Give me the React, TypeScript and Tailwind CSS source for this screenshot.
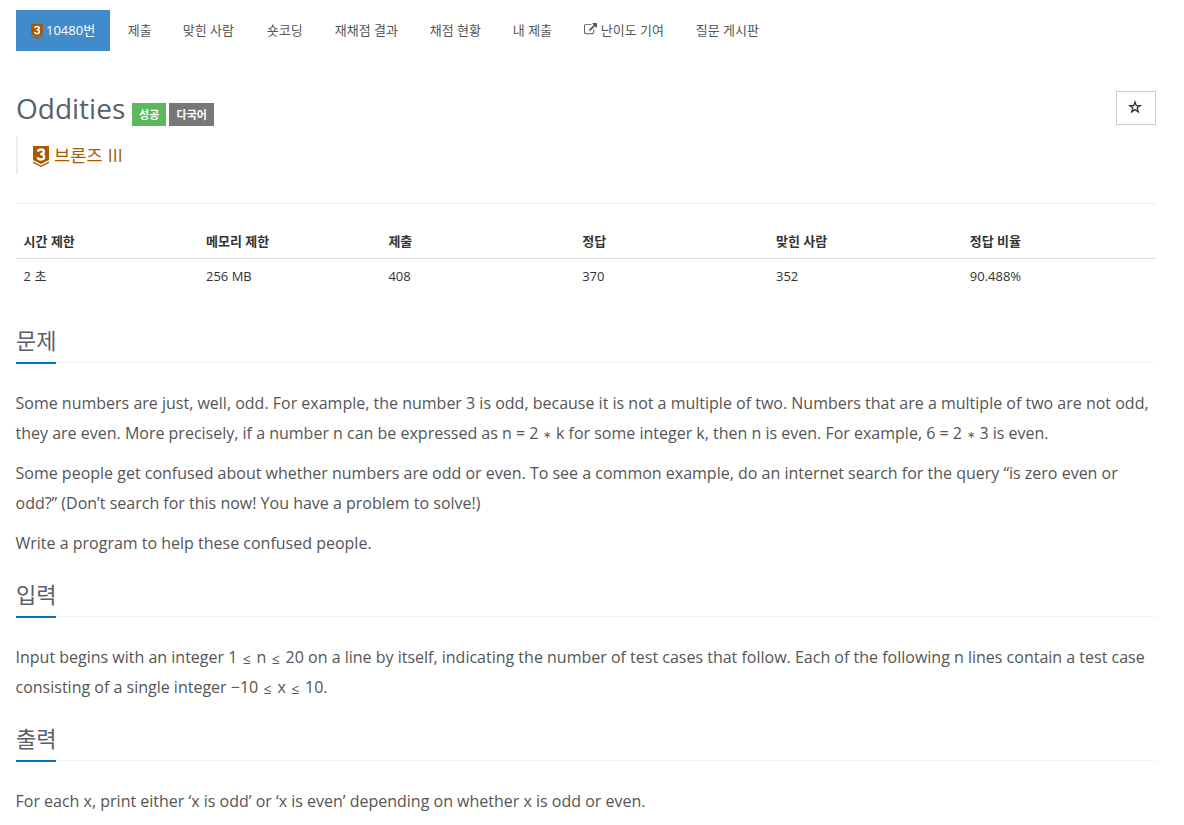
import type { ReactNode } from 'react'

const tabs = [
  { label: '제출', width: 'w-[55px]' },
  { label: '맞힌 사람', width: 'w-[84px]' },
  { label: '숏코딩', width: 'w-[68px]' },
  { label: '재채점 결과', width: 'w-[95px]' },
  { label: '채점 현황', width: 'w-[83px]' },
  { label: '내 제출', width: 'w-[71px]' },
  { label: '난이도 기여', width: 'w-[112px]', external: true },
  { label: '질문 게시판', width: 'w-[95px]' }
]

const info = [
  { label: '시간 제한', value: '2 초', width: 'w-[16%]' },
  { label: '메모리 제한', value: '256 MB', width: 'w-[16%]' },
  { label: '제출', value: '408', width: 'w-[17%]' },
  { label: '정답', value: '370', width: 'w-[17%]' },
  { label: '맞힌 사람', value: '352', width: 'w-[17%]' },
  { label: '정답 비율', value: '90.488%', width: 'w-[17%]' }
]

export default function App() {
  return (
    <div className="h-[825px] overflow-hidden bg-white pl-4 pr-7 pt-2.5 font-['Open_Sans','Noto_Sans_CJK_KR',sans-serif] text-[13px] text-[#555]">
      <nav className="flex h-[41px] whitespace-nowrap leading-[38px]">
        <a className="mr-0.5 flex w-[94px] items-start bg-[#428bca] pl-[15px] pt-px text-white">
          <TierBadge className="mr-[3px] mt-[13px] h-[15px] w-3" />
          10480번
        </a>
        {tabs.map((tab) => (
          <a key={tab.label} className={`flex h-[39px] shrink-0 items-center pl-[15.8px] ${tab.width}`}>
            {tab.external && <ExternalIcon />}
            {tab.label}
          </a>
        ))}
      </nav>

      <header className="mt-10 flex h-[45px] items-start justify-between">
        <div className="flex">
          <h1 className="text-[28px] leading-[34px] text-[#585f69]">Oddities</h1>
          <span className="ml-[7px] mt-3 h-[23px] w-[34px] bg-[#5cb85c] text-center text-[11px] font-bold leading-[23px] text-white">
            성공
          </span>
          <span className="ml-[3px] mt-3 h-[23px] w-[45px] bg-[#777] text-center text-[11px] font-bold leading-[23px] text-white">
            다국어
          </span>
        </div>
        <button className="flex h-[34px] w-10 items-center justify-center border border-[#ccc] pb-0.5 pr-0.5 text-[#333]">
          <StarIcon />
        </button>
      </header>

      <blockquote className="flex h-[38px] items-center border-l-2 border-[#eee] pl-[15px] text-[17.5px] tracking-[0.2px] text-[#ad5600]">
        <TierBadge className="mr-[5px] mt-0.5 h-[21px] w-4" />
        브론즈 III
      </blockquote>

      <hr className="mt-[29px] border-[#eee]" />

      <table className="mt-5 w-full table-fixed text-left text-[#333]">
        <thead>
          <tr className="h-[34px] border-b border-[#ddd]">
            {info.map((col) => (
              <th key={col.label} className={`px-[7.6px] pt-px font-bold ${col.width}`}>
                {col.label}
              </th>
            ))}
          </tr>
        </thead>
        <tbody>
          <tr className="h-9">
            {info.map((col) => (
              <td key={col.label} className="px-[7.6px]">
                {col.value}
              </td>
            ))}
          </tr>
        </tbody>
      </table>

      <div className="mt-[27px]">
        <Section title="문제">
          <p>
            Some numbers are just, well, odd. For example, the number 3 is odd, because it is not a
            multiple of two. Numbers that are a multiple of two are not odd,
            <br />
            they are even. More precisely, if a number n can be expressed as n = 2 <Times /> k for
            some integer k, then n is even. For example, 6 = 2 <Times /> 3 is even.
          </p>
          <p>
            Some people get confused about whether numbers are odd or even. To see a common example,
            do an internet search for the query “is zero even or
            <br />
            odd?” (Don’t search for this now! You have a problem to solve!)
          </p>
          <p>Write a program to help these confused people.</p>
        </Section>
        <Section title="입력">
          <p>
            Input begins with an integer 1 <Leq /> n <Leq /> 20 on a line by itself, indicating the
            number of test cases that follow. Each of the following n lines contain a test case
            <br />
            consisting of a single integer −10 <Leq /> x <Leq /> 10.
          </p>
        </Section>
        <Section title="출력">
          <p>
            For each x, print either ‘x is odd’ or ‘x is even’ depending on whether x is odd or
            even.
          </p>
        </Section>
      </div>
    </div>
  )
}

function Section({ title, children }: { title: string; children: ReactNode }) {
  return (
    <section className="mb-[17px]">
      <div className="mb-[25px] flex h-[42px] border-b border-dotted border-[#e4e9f0]">
        <h2 className="h-[43px] shrink-0 border-b-2 border-[#0076c0] text-[22px] leading-[39px] text-[#585f69]">
          {title}
        </h2>
      </div>
      <div className="-ml-[0.5px] space-y-2.5 whitespace-nowrap text-base leading-[30px]">
        {children}
      </div>
    </section>
  )
}

// Operators are set smaller than the surrounding text
function Times() {
  return (
    <span className="relative -top-px inline-block w-[9.2px] text-center text-[10px] leading-none">
      ∗
    </span>
  )
}

function Leq() {
  return (
    <span className="relative top-px inline-block w-[10.9px] text-center text-[14px] leading-none">
      ≤
    </span>
  )
}

function TierBadge({ className }: { className: string }) {
  return (
    <svg viewBox="0 0 16 21" className={`shrink-0 ${className}`}>
      <path d="M0 0h16v14l-8 4-8-4z" fill="#ad5600" />
      <path d="M0 15.400l8 4 8-4v1.600l-8 4-8-4z" fill="#ad5600" />
      <path
        d="M4.700 5.500C5.300 4 6.400 3.500 8 3.500c1.800 0 2.900.9 2.900 2.300S9.700 8.100 7.300 8.100c2.600 0 3.900 1 3.900 2.700S9.900 13.500 8 13.500c-1.800 0-3-.7-3.500-2.200"
        fill="none"
        stroke="#fff"
        strokeWidth="2.300"
      />
    </svg>
  )
}

function ExternalIcon() {
  return (
    <svg viewBox="0 0 1792 1792" className="mr-1 h-[13px] w-[13px] shrink-0" fill="currentColor">
      <path d="M1408 928v320q0 119-84.500 203.500T1120 1536H288q-119 0-203.500-84.500T0 1248V416q0-119 84.500-203.500T288 128h704q14 0 23 9t9 23v64q0 14-9 23t-23 9H288q-66 0-113 47t-47 113v832q0 66 47 113t113 47h832q66 0 113-47t47-113V928q0-14 9-23t23-9h64q14 0 23 9t9 23zM1792 64v512q0 26-19 45t-45 19-45-19l-176-176-652 652q-10 10-23 10t-23-10L695 983q-10-10-10-23t10-23l652-652-176-176q-19-19-19-45t19-45 45-19h512q26 0 45 19t19 45z" />
    </svg>
  )
}

function StarIcon() {
  return (
    <svg
      viewBox="0 0 14 14"
      className="h-[14px] w-[14px]"
      fill="none"
      stroke="currentColor"
      strokeWidth="1.300"
    >
      <path d="M7 2l1.300 3.700h3.800L9.100 8l1.200 3.900L7 9.600l-3.300 2.300L4.900 8l-3-2.300h3.800z" />
    </svg>
  )
}
